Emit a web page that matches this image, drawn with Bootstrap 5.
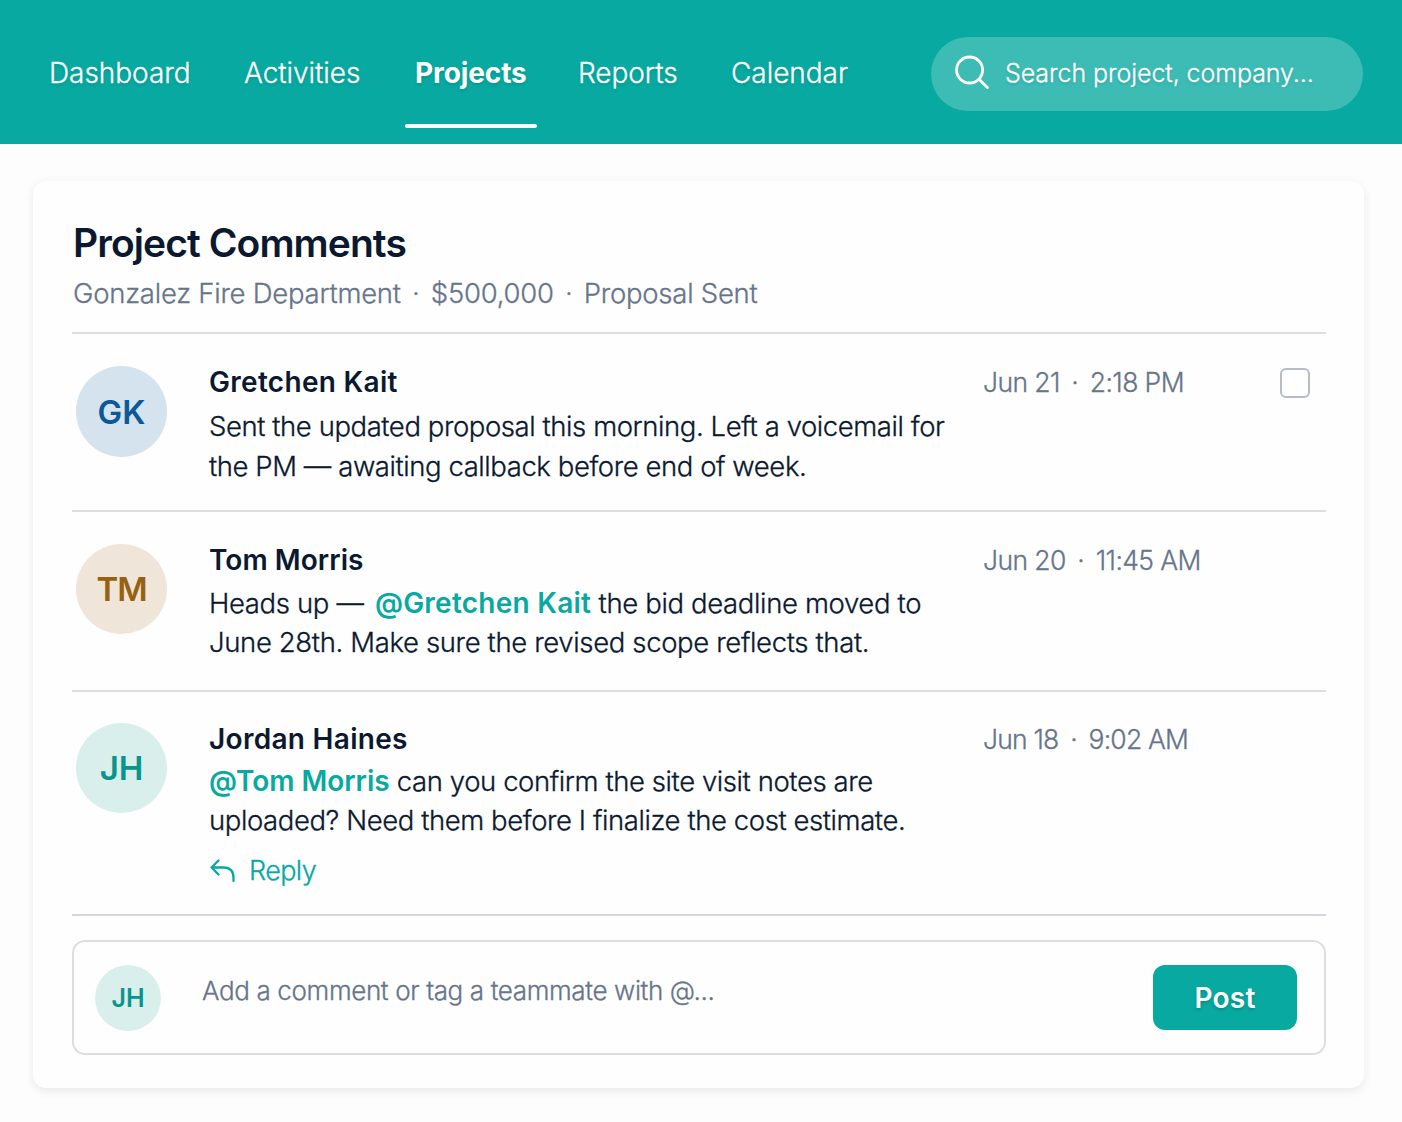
<!DOCTYPE html>
<html lang="en">
<head>
<meta charset="utf-8">
<meta name="viewport" content="width=device-width, initial-scale=1">
<title>Project Comments</title>
<link href="https://cdn.jsdelivr.net/npm/bootstrap@5.3.0/dist/css/bootstrap.min.css" rel="stylesheet">
<style>
:root{--teal:#07a9a0;--ink:#0b1930;--muted-ink:#67758b;--rule:#dcdfe2}
body{min-height:1122px;padding-bottom:34px;font-family:Inter,"Liberation Sans",sans-serif;font-weight:300;font-size:27.5px;color:var(--ink);background:#fdfdfd;-webkit-text-stroke:.3px currentColor}
.topbar{height:144px;background:var(--teal);padding:0 39px 0 49px}
.topbar .nav-link{padding:0;font-size:28px;line-height:36px;margin-top:2px;color:#fff;letter-spacing:-.05px;text-shadow:0 2px 3px rgba(0,85,80,.2)}
.topbar .nav-link.active{font-weight:700;position:relative;letter-spacing:-.1px;-webkit-text-stroke:0}
.topbar .nav-link.active::after{content:"";position:absolute;left:-10px;top:69px;width:132px;height:4px;border-radius:2px;background:#fff}
.w-dash{width:195px}.w-act{width:171px}.w-proj{width:163px}.w-rep{width:153px}
.searchbox{width:432px;height:74px;background:rgba(255,255,255,.22);padding:0 24px;margin-top:3px;color:#fff}
.searchbox svg{margin-top:-2px}
.searchbox input{font-size:25px;font-weight:300;color:#fff;letter-spacing:-.08px;margin-left:15px;text-shadow:0 2px 3px rgba(0,85,80,.2)}
.searchbox input::placeholder{color:#fff;opacity:1}
.panel{margin:37px 38px 0 33px;height:907px;border-radius:13px;background:#fefefe;box-shadow:0 3px 10px rgba(20,30,45,.09);padding:37px 38px 0 39px}
.heading{font-size:39px;line-height:48px;font-weight:600;letter-spacing:-.92px;padding-top:1px;-webkit-text-stroke:0}
.panel-head{height:116px;border-bottom:2px solid var(--rule);padding-left:1px}
.deal{color:var(--muted-ink);line-height:36px;margin-top:8px;letter-spacing:-.25px}
.sep{display:inline-block;width:30px;text-align:center}
.entry{border-bottom:2px solid var(--rule);padding:32px 16px 0 4px}
.entry-1{height:178px}.entry-2{height:180px}.entry-3{height:224px;padding-top:31px;border-color:#d3d6da}
.avatar{width:91px;height:91px;font-size:33px;font-weight:600;-webkit-text-stroke:0}
.entry-2 .avatar,.entry-3 .avatar{height:90px}
.entry-2 .avatar{letter-spacing:-1px}
.avatar span{position:relative;top:1px}
.av-blue{background:#d4e3ee;color:#0b5999}
.av-sand{background:#efe6d9;color:#966111}
.av-mint{background:#d9efec;color:#0a958c}
.avatar-sm{width:66px;height:66px;font-size:25px}
.message{width:774px;margin-left:42px;margin-top:-2px;white-space:nowrap}
.who{font-size:28px;font-weight:600;line-height:36px;letter-spacing:.3px;-webkit-text-stroke:0}
.entry-2 .who{letter-spacing:.05px}
.said{line-height:40px;margin-top:6px;letter-spacing:-.43px}
.entry-2 .said{line-height:39px;margin-top:6px;letter-spacing:-.36px}
.entry-3 .said{line-height:39px;margin-top:5px;letter-spacing:-.42px}
.mention{font-weight:600;font-size:28px;color:var(--teal);letter-spacing:.25px;-webkit-text-stroke:0}
.entry-2 .mention{margin-left:4px}
.entry-3 .mention{letter-spacing:-.05px}
.when{font-size:26.5px;line-height:36px;margin-top:-2px;color:var(--muted-ink);letter-spacing:-.6px;white-space:nowrap}
.entry-3 .when{letter-spacing:-.8px}
.tick{width:30px;height:30px;border:2px solid #b5bcc8!important;border-radius:6px!important;margin-top:2px}
.reply{color:var(--teal);font-size:27px;line-height:36px;letter-spacing:-.6px;margin-top:13px}
.reply svg{margin-right:14px}
.composer{height:115px;margin-top:24px;border:2px solid var(--rule);border-radius:13px;padding:0 27px 0 21px}
.composer input{font-size:26px;font-weight:300;letter-spacing:-.37px;color:var(--muted-ink);margin:-14px 0 0 41px;min-width:0}
.composer input::placeholder{color:var(--muted-ink);opacity:1}
.bare{background:none;border:0;padding:0;outline:0;width:100%}
.btn-post{width:144px;height:65px;border-radius:12px;background:var(--teal);color:#fff;font-size:28px;font-weight:600;letter-spacing:.2px;padding:0;text-shadow:0 2px 3px rgba(0,85,80,.3);-webkit-text-stroke:0}
</style>
</head>
<body>
<nav class="topbar d-flex align-items-center justify-content-between">
  <ul class="nav flex-nowrap">
    <li class="w-dash"><a class="nav-link" href="#">Dashboard</a></li>
    <li class="w-act"><a class="nav-link" href="#">Activities</a></li>
    <li class="w-proj"><a class="nav-link active" href="#">Projects</a></li>
    <li class="w-rep"><a class="nav-link" href="#">Reports</a></li>
    <li><a class="nav-link" href="#">Calendar</a></li>
  </ul>
  <div class="searchbox rounded-pill d-flex align-items-center">
    <svg class="flex-shrink-0" width="35" height="35" viewBox="0 0 35 35" fill="none" stroke="#fff" stroke-width="2.8" stroke-linecap="round"><circle cx="14.6" cy="15" r="13"/><path d="M24 24.300 32.400 32.500"/></svg>
    <input class="bare" type="text" placeholder="Search project, company..." aria-label="Search">
  </div>
</nav>

<main class="panel">
  <header class="panel-head">
    <h1 class="heading mb-0">Project Comments</h1>
    <div class="deal">Gonzalez Fire Department<span class="sep">·</span>$500,000<span class="sep">·</span>Proposal Sent</div>
  </header>

  <article class="entry entry-1 d-flex align-items-start">
    <div class="avatar av-blue rounded-circle d-flex align-items-center justify-content-center flex-shrink-0"><span>GK</span></div>
    <div class="message">
      <div class="who">Gretchen Kait</div>
      <div class="said">Sent the updated proposal this morning. Left a voicemail for<br>the PM — awaiting callback before end of week.</div>
    </div>
    <div class="when">Jun 21<span class="sep">·</span>2:18 PM</div>
    <input class="tick form-check-input ms-auto" type="checkbox" aria-label="Mark as done">
  </article>

  <article class="entry entry-2 d-flex align-items-start">
    <div class="avatar av-sand rounded-circle d-flex align-items-center justify-content-center flex-shrink-0"><span>TM</span></div>
    <div class="message">
      <div class="who">Tom Morris</div>
      <div class="said">Heads up — <span class="mention">@Gretchen Kait</span> the bid deadline moved to<br>June 28th. Make sure the revised scope reflects that.</div>
    </div>
    <div class="when">Jun 20<span class="sep">·</span>11:45 AM</div>
  </article>

  <article class="entry entry-3 d-flex align-items-start">
    <div class="avatar av-mint rounded-circle d-flex align-items-center justify-content-center flex-shrink-0"><span>JH</span></div>
    <div class="message">
      <div class="who">Jordan Haines</div>
      <div class="said"><span class="mention">@Tom Morris</span> can you confirm the site visit notes are<br>uploaded? Need them before I finalize the cost estimate.</div>
      <a class="reply d-flex align-items-center text-decoration-none" href="#">
        <svg width="26" height="24" viewBox="0 0 26 24" fill="none" stroke="currentColor" stroke-width="2.3" stroke-linecap="round" stroke-linejoin="round"><path d="M9.500 1.500 2.500 8.500l7 7M2.500 8.500h12q10 0 10 10.500v3"/></svg>Reply
      </a>
    </div>
    <div class="when">Jun 18<span class="sep">·</span>9:02 AM</div>
  </article>

  <div class="composer d-flex align-items-center">
    <div class="avatar avatar-sm av-mint rounded-circle d-flex align-items-center justify-content-center flex-shrink-0"><span>JH</span></div>
    <input class="bare" type="text" placeholder="Add a comment or tag a teammate with @..." aria-label="Add a comment">
    <button class="btn btn-post flex-shrink-0" type="button">Post</button>
  </div>
</main>
<script src="https://cdn.jsdelivr.net/npm/bootstrap@5.3.0/dist/js/bootstrap.bundle.min.js"></script>
</body>
</html>
